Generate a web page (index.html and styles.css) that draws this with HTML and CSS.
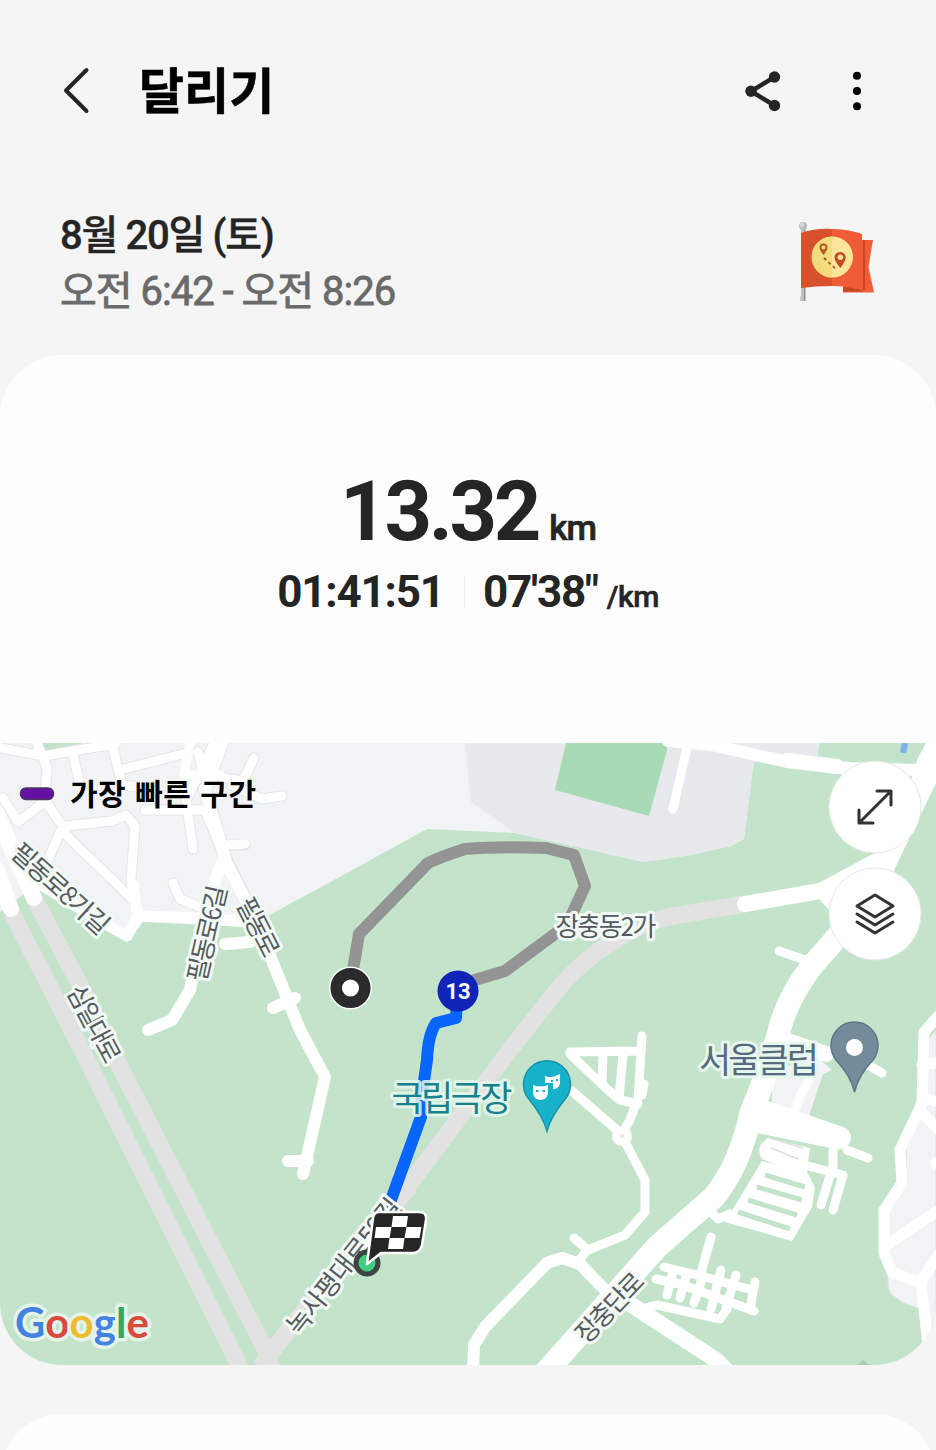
FILE: index.html
```html
<!DOCTYPE html>
<html lang="ko">
<head>
<meta charset="utf-8">
<title>달리기</title>
<link rel="stylesheet" href="styles.css">
</head>
<body>
<header class="bar">
  <svg class="back" width="32" height="52" viewBox="0 0 32 52"><path d="M26.500 5 6 25.500 26.500 46"/></svg>
  <h1 class="title">달리기</h1>
  <svg class="share" width="40" height="44" viewBox="0 0 40 44"><path d="M31.500 8 8 22.200 31.500 36.500"/><circle cx="8" cy="22.200" r="5.700"/><circle cx="31.500" cy="8" r="5.700"/><circle cx="31.500" cy="36.500" r="5.700"/></svg>
  <svg class="more" width="10" height="44" viewBox="0 0 10 44"><circle cx="5" cy="6.700" r="4"/><circle cx="5" cy="22" r="4"/><circle cx="5" cy="37.300" r="4"/></svg>
</header>
<section class="when">
  <div class="stamp">
    <p class="date">8월 20일 (토)</p>
    <p class="time">오전 6:42 - 오전 8:26</p>
  </div>
  <svg class="flag" width="80" height="84" viewBox="797 219 80 84">
    <path fill="#c1c1c1" d="M801 228h4v73h-5l1-7z"/><path fill="#8e8e8e" d="M804 228h1.500v73H804z"/>
    <circle cx="803" cy="226" r="4" fill="#b9bcbc"/><circle cx="802" cy="225" r="2" fill="#dedede"/>
    <path fill="#f05b38" d="M862 240h11l-4.500 27 5.500 25.500H843v-6z"/>
    <path fill="#c94624" d="M843 286l20 4v-50h2v49l-3 2.500h-19z"/>
    <path fill="#d7512d" d="M801 233q15-5 31-4v57q-16 0-31 2z"/>
    <path fill="#f15c38" d="M832 229q15 0 30 5v56q-15-4-30-4z"/>
    <circle cx="832.500" cy="257" r="20.500" fill="#fce59a"/><path fill="#f3dc7e" d="M832 236.500a20.500 20.500 0 0 0 0 41z"/>
    <path fill="#b45a1c" fill-rule="evenodd" d="M823.500 255q-4-5-4-7.500a4 4 0 0 1 8 0q0 2.500-4 7.500zm0-9.500a2 2 0 1 0 .1 0z"/>
    <path fill="#c54a1e" fill-rule="evenodd" d="M840.300 268q-5.800-7-5.800-10.500a5.600 5.600 0 0 1 11.200 0q0 3.500-5.400 10.500zm0-13.500a2.800 2.800 0 1 0 .1 0z"/>
    <path stroke="#9c5420" stroke-width="1.800" stroke-dasharray="3 3" d="M824 258l12 11" fill="none"/>
  </svg>
</section>
<main class="card">
  <section class="summary">
    <div class="distance"><span class="km">13.32</span><span class="unit">km</span></div>
    <div class="stats"><span class="dur">01:41:51</span><i class="rule"></i><span class="pace">07'38"</span><span class="per">/km</span></div>
  </section>
  <section class="map">
    <svg class="canvas" width="936" height="622" viewBox="0 743 936 622">
      <rect y="743" width="936" height="622" class="block"/>
      <path class="park" d="M0 912 20 897 38 883 127 942 143 922 247 927 312 892 427 829 515 833 644 862 691 855 731 846 744 839 754 757 936 772V1365H0z"/>
      <path class="park" d="M37 743H84L45 753zM819 743H936V775L817 757z"/>
      <path class="built" d="M465 743H819L817 757 754 762 744 839 731 846 691 855 644 862 515 833 471 802z"/>
      <path class="pitch" d="M566 743H667V750L649 816 555 790z"/>
      <path d="M905 743l-2 10" stroke="#82aff0" stroke-width="6"/>
      <!-- city blocks inside the park -->
      <path class="block edge" d="M936 1030 928 1040 924 1105 906 1150 907 1185 888 1210 888 1285 890 1293 903 1303 921 1309 930 1365H936z"/>
      <path class="block" d="M818 1058 832 1070 823 1074 808 1119 790 1115 772 1104V1070z"/>

      <g class="trunk">
        <path d="M12 913 82 1050 240 1367"/><path d="M35 900 80 985 120 1067 267 1353 272 1367"/>
        <path d="M260 1367 290 1328 410 1186"/><path d="M394 1205 512 1047 562 984Q590 954 615 941"/>
        <path d="M612 942Q640 924 668 917L745 904"/>
      </g>

      <g class="casing">
        <path class="w9" d="M-4 747 44 756 78 750 115 744M37 743 47 768 45 800 65 830M44 802 18 822 3 798M73 755 79 780M112 744 122 785 138 787M120 770 190 752M65 826 112 821 126 815 135 826 131 880M65 834 131 898M60 832 48 860M214 743 200 773 186 800 193 849M145 810H205L225 858M198 752 204 775 243 781 254 758M232 785 262 799 282 796M173 883 180 899 200 907M228 845H245"/>
        <path class="w12" d="M222 743 205 790 225 858 258 925"/>
      </g>
      <g class="road">
        <path class="w15" d="M-4 868 11 909M-4 812 12 850 34 898"/>
        <path class="w9" d="M-4 747 44 756 78 750 115 744M37 743 47 768 45 800 65 830M44 802 18 822 3 798M73 755 79 780M112 744 122 785 138 787M120 770 190 752M65 826 112 821 126 815 135 826 131 880M65 834 131 898M60 832 48 860M190 743 184 775 220 775"/>
        <path class="w11" d="M133 885 138 917 127 936 100 921 40 884M140 916 200 918 250 922"/>
        <path class="w9" d="M214 743 200 773 186 800 193 849M145 810H205L225 858M198 752 204 775 243 781 254 758M232 785 262 799 282 796M173 883 180 899 200 907M245 844 228 845"/>
        <path class="w12" d="M222 743 205 790 225 858 222 863 207 905 190 990 172 1020 148 1030M224 858 258 925 277 973 300 1030 325 1077 303 1174M288 1161H308M273 1008 295 998M225 944 250 942"/>
      </g>

      <g class="road">
        <path class="w9" d="M688 743 673 809"/>
        <path class="w12" d="M668 741 712 745 787 762 837 768 920 770M787 759 837 765"/>
        <path class="w15" d="M745 904 820 891"/>
        <path d="M936 743 926 743 917 760 913 775 880 850 815 885 819 899 829 910 880 920 895 868 936 783z"/>
        <path class="w20" d="M846 927 811 967Q786 1000 778 1035L762 1085 751 1113Q740 1165 714 1197L657 1247 546 1372"/>
        <path class="w9" d="M779 951 808 961M800 1043 830 1054M868 1065 882 1073"/>
        <path class="w15" d="M785 1040 826 1054"/>
        <!-- theatre grounds -->
        <path class="w9" d="M570 1052 637 1051M642 1036 638 1098 630 1120 622 1133M644 1084 642 1095M603 1054 602 1082M623 1054 619 1098"/>
        <path class="w9" d="M570 1054 608 1090 620 1100 638 1104M572 1091 617 1130"/>
        <path class="w9" d="M624 1140 645 1180V1212L625 1235 588 1250 574 1238M587 1250 578 1262"/>
        <path class="w12" d="M473 1372 474 1345 485 1327 547 1263 562 1258 580 1264 606 1291"/>
        <circle cx="622" cy="1136" r="10"/><circle cx="622" cy="1136" r="2" fill="#dfe5e5"/>
        <!-- Seoul club grounds -->
        <path d="M752 1096 774 1103 843 1127Q854 1132 850 1142 846 1151 835 1149L752 1132z"/>
        <path class="w9" d="M810 1078 801 1094 794 1112M847 1150 868 1158M833 1150V1166L821 1205M843 1175 833 1210M808 1166 843 1175"/>
        <path d="M768 1138 810 1148 806 1177 762 1159Q757 1151 761 1144z"/>
        <path d="M762 1161 807 1172 815 1187 812 1207 792 1241 725 1222z"/>
        <path class="slot" d="M765 1175 805 1187M757 1187 802 1200M748 1200 797 1215M738 1212 790 1229"/>
        <path class="seam" d="M770 1138 803 1148M771 1148 798 1159"/>
        <path class="w9" d="M709 1210 718 1219 730 1214"/>
        <path class="w9" d="M711 1237 701 1273M664 1267 705 1277 752 1290M656 1279 680 1284 754 1311M641 1309 657 1305 720 1319 727 1309M673 1272 667 1295M687 1273 680 1298M703 1276 694 1303M721 1270 711 1309M736 1275 726 1307M755 1282 750 1309"/>
        <path class="w15" d="M621 1298 716 1360 728 1372"/>
        <!-- eastern streets -->
        <path class="w11" d="M942 1012 924 1032 922 1103 900 1150 902 1183 884 1210V1253L892 1272 920 1283 942 1250M921 1283 928 1345M888 1244 942 1208M922 1113 942 1134M922 1065 942 1062M924 1098 942 1103"/>
        <circle cx="936" cy="1163" r="6"/>
      </g>
      <path d="M857 1365 863 1360 870 1365z" fill="#a9cdb2"/>

      <path class="past" d="M353 970 359 934 428 863Q440 857 465 849 500 846 546 848L574 855 585 886 567 925 505 971 458 985"/>
      <path class="fast" d="M457 1000 456 1018 436 1023Q428 1035 427 1060L422 1095 421 1117 383 1222"/>

      <g class="street">
        <text transform="translate(62 887) rotate(42)" textLength="122">필동로8가길</text>
        <text transform="translate(205 933) rotate(-77)" textLength="98">필동로6길</text>
        <text transform="translate(260 926) rotate(63)" textLength="63">필동로</text>
        <text transform="translate(96 1023) rotate(62)" textLength="84">삼일대로</text>
        <text transform="translate(342 1265) rotate(-51.500)" textLength="166">녹사평대로59길</text>
        <text transform="translate(608 1306) rotate(-46)" textLength="86">장충단로</text>
        <text transform="translate(606 924)" textLength="101">장충동2가</text>
      </g>
      <g class="place">
        <text x="452" y="1111" textLength="121" fill="#17818f" stroke-opacity=".85">국립극장</text>
        <text x="759" y="1073" textLength="120" fill="#566c7d">서울클럽</text>
      </g>

      <path d="M547 1131Q543 1116 528 1098A23.500 23.500 0 1 1 566 1098Q551 1116 547 1131z" fill="#18b1ca" stroke="#1593a8" stroke-width="1.500"/>
      <path fill="#fff" d="M545 1076q7 3 15-2v9q-1 6-7 6v-6h-8zM533 1085q7 3 15 0v8q-1 7-7.500 7t-7.500-7z"/>
      <path stroke="#18b1ca" stroke-width="2" fill="none" d="M536 1091h2.500M542.500 1091h2.500M551 1081h2M556 1080h2"/>
      <path d="M854.500 1092Q851 1076 836 1060A23.500 23.500 0 1 1 873 1060Q858 1076 854.500 1092z" fill="#748b9c" stroke="#5c7589" stroke-width="1.500"/>
      <circle cx="854.500" cy="1047.500" r="8.500" fill="#fff"/>

      <circle cx="350.500" cy="988" r="15" fill="#fff" stroke="#fff" stroke-width="13"/><circle cx="350.500" cy="988" r="14.300" fill="#fff" stroke="#2b2b2b" stroke-width="11.500"/>
      <circle cx="458" cy="991" r="20.500" fill="#1024b8"/>
      <text class="lap" x="458" y="999">13</text>
      <circle cx="367" cy="1263" r="11" fill="#43cc83" stroke="#3c4541" stroke-width="5"/>
      <path d="M379 1212H419Q427 1212 426 1220L422 1245Q420 1253 413 1253H381L367 1264 373 1218Q374 1212 379 1212z" fill="#262626" stroke="#fff" stroke-width="2.500" stroke-linejoin="round"/>
      <path fill="#fff" d="M393 1216h15l-1.500 11h-15zM376 1227h15.500l-2 11H374.500zM406.500 1227H421.500l-2 11H404.500zM389.500 1238H404.500l-1.500 11H388z"/>

      <rect x="20.500" y="788" width="33" height="11.500" rx="5.500" fill="#6510a4" stroke="#48345b" stroke-width="1.500"/>
      <text class="legend" x="70" y="805" textLength="186">가장 빠른 구간</text>
      <text class="google" x="15" y="1338" textLength="134"><tspan fill="#4683e0">G</tspan><tspan fill="#d94a3c">o</tspan><tspan fill="#efbd2c">o</tspan><tspan fill="#4683e0">g</tspan><tspan fill="#3aa757">l</tspan><tspan fill="#d94a3c">e</tspan></text>

      <g class="button"><circle cx="875" cy="807" r="46"/><path d="M860 822 890 792M877 791H891V805M859 810V823H873"/></g>
      <g class="button"><circle cx="875" cy="914" r="46"/><path d="M875 895 893 906 875 917 857 906zM857 914 875 925 893 914M857 922 875 933 893 922"/></g>
    </svg>
  </section>
</main>
<section class="next"></section>
</body>
</html>
```

FILE: styles.css
```css
* { box-sizing: border-box; margin: 0; padding: 0; }
body {
  width: 936px; height: 1450px; overflow: hidden;
  display: flex; flex-direction: column;
  background: #f5f5f5; color: #252525;
  font-family: Roboto, "Noto Sans CJK KR", sans-serif;
}
svg { display: block; flex: none; }
.bar { flex: none; display: flex; align-items: center; height: 181px; padding: 0 74px 0 60px; }
.back { fill: none; stroke: #252525; stroke-width: 4; stroke-linecap: round; stroke-linejoin: round; }
.title { margin: 4px auto 0 47px; font-size: 49px; line-height: 60px; font-weight: 700; color: #000; -webkit-text-stroke: .6px #000; }
.share { margin-right: 69px; fill: #252525; }
.share path { fill: none; stroke: #252525; stroke-width: 4.500; }
.more { fill: #000; }
.when { flex: none; display: flex; justify-content: space-between; height: 174px; padding: 26px 59px 0 60px; }
.stamp { padding-top: 1px; }
.date, .time { font-size: 40px; line-height: 56px; font-weight: 500; letter-spacing: -1.300px; white-space: nowrap; -webkit-text-stroke: .4px #252525; }
.time { color: #6a6a6a; font-weight: 400; letter-spacing: -1px; -webkit-text-stroke: .8px #6a6a6a; }
.flag { margin-top: 12px; }
.card { flex: none; border-radius: 62px; overflow: hidden; background: #fdfdfd; height: 1010px; }
/* top slice of the following card, cut off by the screen edge */
.next {
  flex: none; margin-top: 49px; height: 36px;
  background:
    radial-gradient(circle at 62px 62px, #fdfdfd 61.500px, transparent 62.500px) 0 0 / 62px 36px no-repeat,
    radial-gradient(circle at 0 62px, #fdfdfd 61.500px, transparent 62.500px) 100% 0 / 62px 36px no-repeat,
    linear-gradient(#fdfdfd, #fdfdfd) 50% 0 / 812px 36px no-repeat;
}
.summary { height: 388px; padding-top: 108px; }
.distance, .stats { display: flex; justify-content: center; align-items: baseline; font-weight: 700; }
.distance { height: 98px; line-height: 98px; gap: 11px; }
.km { font-size: 83px; letter-spacing: -3.300px; }
.unit { font-size: 35px; font-weight: 500; letter-spacing: -1px; -webkit-text-stroke: .7px #252525; }
.stats { height: 60px; line-height: 60px; padding-top: 1px; }
.dur, .pace { font-size: 44px; letter-spacing: -1.200px; }
.rule { width: 1px; height: 34px; margin: 0 18px 0 20px; background: #ededed; align-self: center; }
.per { font-size: 30px; font-weight: 500; margin-left: 9px; letter-spacing: -.5px; -webkit-text-stroke: .6px #252525; }
.block { fill: #f1f3f5; }
.edge { stroke: #dcdfe3; }
.park { fill: #c3e4cb; }
.built { fill: #e8e9ed; }
.pitch { fill: #a8dab5; }
.trunk { fill: none; stroke: #e2e2e2; stroke-width: 17; stroke-linejoin: round; }
.casing { fill: none; stroke: #e3e6e9; stroke-linecap: round; stroke-linejoin: round; }
.casing .w9 { stroke-width: 11px; }
.casing .w12 { stroke-width: 14px; }
.road { fill: #fff; }
.road path[class] { fill: none; stroke: #fff; stroke-linecap: round; stroke-linejoin: round; }
.road .w9 { stroke-width: 9px; }
.road .w11 { stroke-width: 11px; }
.road .w12 { stroke-width: 12px; }
.road .w15 { stroke-width: 16px; }
.road .w20 { stroke-width: 23px; }
.road path.slot { stroke: #c3e4cb; stroke-width: 5px; stroke-linecap: butt; }
.road path.seam { stroke: #dcdfe0; stroke-width: 1.500px; }
.past, .fast { fill: none; stroke-width: 12px; stroke-linejoin: round; }
.past { stroke: #949494; }
.fast { stroke: #0866ff; }
.street text, .place text { text-anchor: middle; paint-order: stroke; stroke-linejoin: round; }
.street { font: 26px "Noto Sans CJK KR", sans-serif; fill: #555b60; }
.street text { dominant-baseline: central; stroke: #f3faf5; stroke-width: 6px; }
.place { font: 400 35px "Noto Sans CJK KR", sans-serif; }
.place text { stroke: #e6f7ee; stroke-width: 6px; }
.lap { font: 700 22px Roboto, sans-serif; fill: #fff; text-anchor: middle; }
.legend { font: 700 30px "Noto Sans CJK KR", sans-serif; fill: #000; }
.google { font: 700 42px Lato, sans-serif; paint-order: stroke; stroke: #e4f4ea; stroke-width: 7px; stroke-linejoin: round; }
.button circle { fill: #fff; stroke: #e4e9e6; }
.button path { fill: none; stroke: #333; stroke-width: 3px; stroke-linecap: round; stroke-linejoin: round; }
```
